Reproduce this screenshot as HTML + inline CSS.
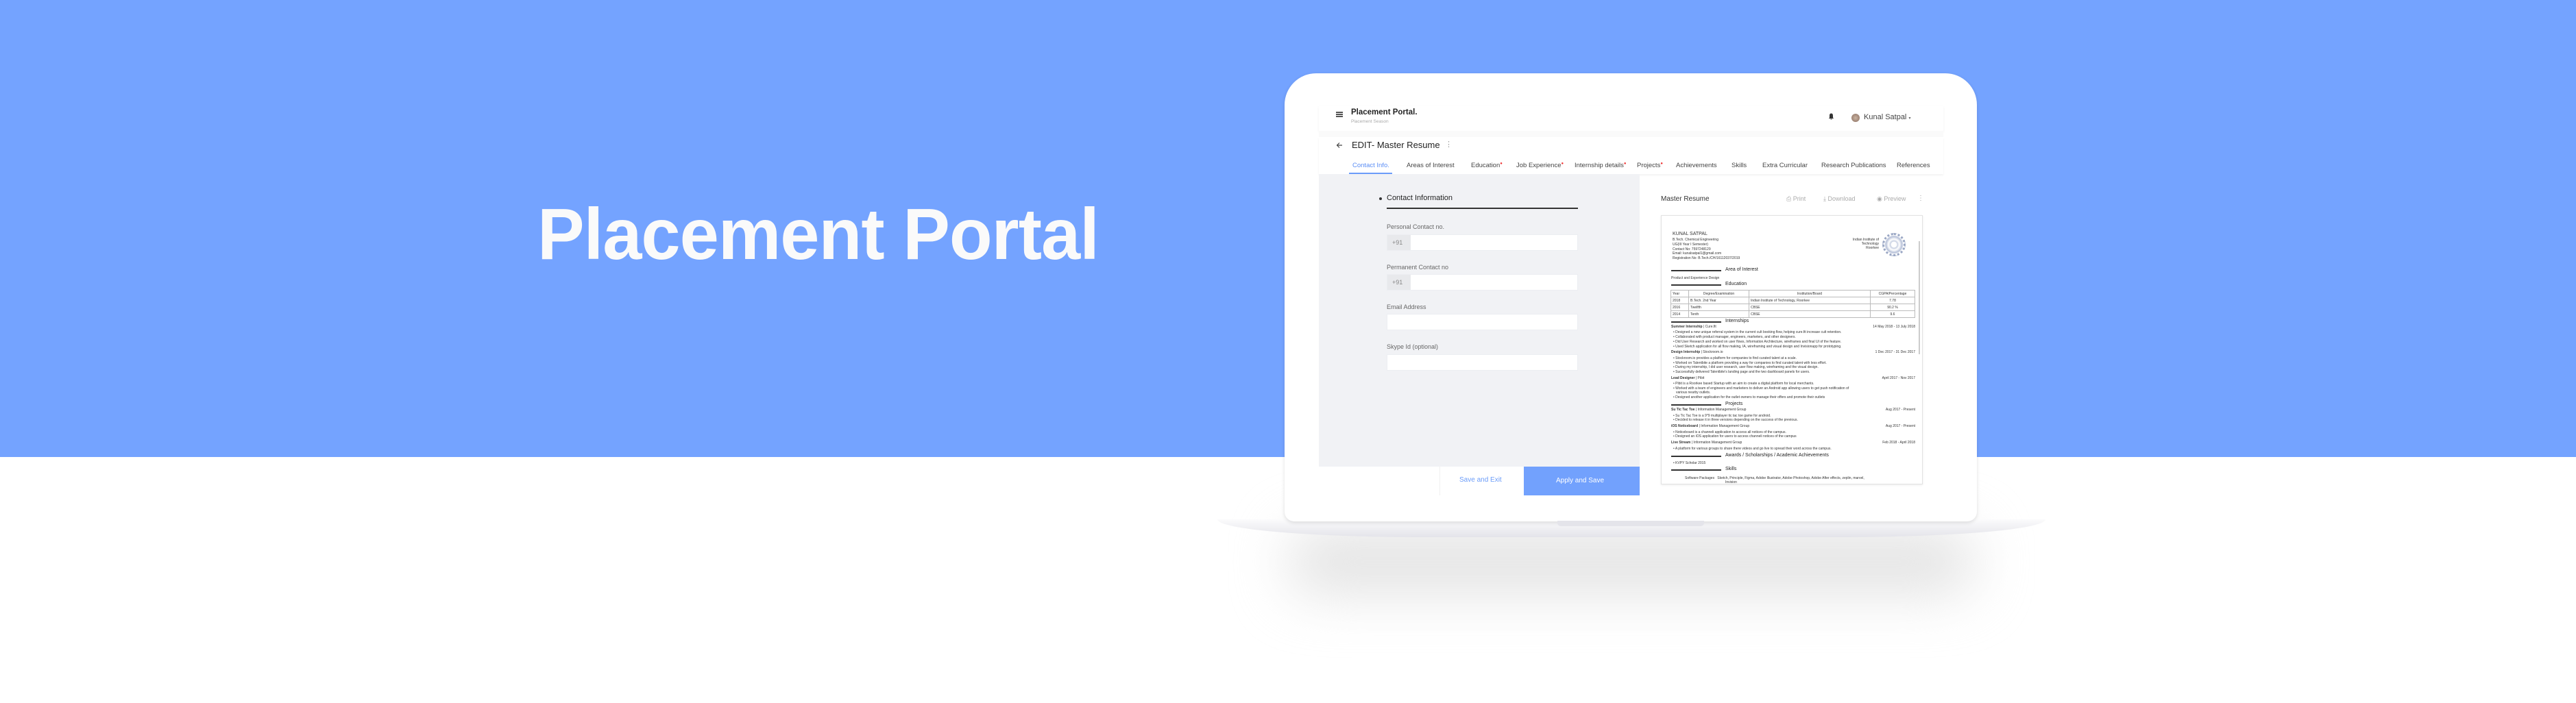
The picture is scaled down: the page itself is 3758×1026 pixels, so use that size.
<!DOCTYPE html>
<html><head><meta charset="utf-8"><style>
*{margin:0;padding:0;box-sizing:border-box}
body{width:3758px;height:1026px;overflow:hidden;background:#fff;position:relative;font-family:"Liberation Sans",sans-serif}
.a{position:absolute}
.blue{left:0;top:0;width:3758px;height:667px;background:#74a3ff}
.title{left:784px;top:282px;font-size:106px;font-weight:bold;color:#fafafa;white-space:nowrap;transform-origin:0 0;transform:scaleX(0.97);letter-spacing:-1px}
.shadow{left:1880px;top:775px;width:1000px;height:90px;background:#e2e2e2;filter:blur(40px);border-radius:40px}
.base{left:1776px;top:758px;width:1208px;height:26px;background:linear-gradient(#fbfbfc,#e4e4ea);border-radius:0 0 300px 300px/0 0 26px 26px}
.body{left:1874px;top:107px;width:1010px;height:654px;background:#fff;border-radius:46px 46px 14px 14px;box-shadow:0 2px 6px rgba(0,0,0,.12)}
.notch{left:2272px;top:760px;width:214px;height:8px;background:#e4e4ea;border-radius:0 0 5px 5px}
.t{position:absolute;white-space:nowrap;color:#333}
.tab{position:absolute;top:236px;font-size:9.5px;color:#444;white-space:nowrap}
.dot{color:#e33;font-size:6px;vertical-align:top}
.lbl{position:absolute;left:2023px;font-size:9px;color:#666}
.inp{position:absolute;left:2023px;width:279px;height:24px;background:#fff;border:1px solid #eceef2}
.pre{position:absolute;left:0;top:0;width:34px;height:22px;background:#e8e9ec;font-size:9px;color:#888;line-height:22px;padding-left:7px}
.r{position:absolute;white-space:nowrap;font-size:5px;color:#333;line-height:6px}
.d{position:absolute;white-space:nowrap;font-size:5px;color:#333;line-height:6px;right:964px}
.hl{position:absolute;left:2438px;width:73px;height:2px;background:#333}
.sh{position:absolute;left:2517px;font-size:7px;color:#222;white-space:nowrap}
table{position:absolute;left:2437px;top:423px;width:357px;border-collapse:collapse;font-size:5px;color:#333}
td{border:1px solid #bbb;height:10px;padding:0 2px}
</style></head><body>
<div class="a blue"></div>
<div class="a title">Placement Portal</div>
<div class="a shadow"></div>
<div class="a base"></div>
<div class="a body"></div>
<div class="a notch"></div>

<div class="a" style="left:1924px;top:154px;width:911px;height:37px;background:#fff;box-shadow:0 2px 4px rgba(0,0,0,.05)"></div>
<div class="a" style="left:1924px;top:191px;width:911px;height:9px;background:#fafafa"></div>
<div class="a" style="left:1924px;top:200px;width:911px;height:54px;background:#fff;box-shadow:0 2px 3px rgba(0,0,0,.05)"></div>
<div class="a" style="left:1949px;top:163px;width:10px;height:1.5px;background:#555;box-shadow:0 3px 0 #555,0 6px 0 #555"></div>
<div class="t" style="left:1971px;top:158px;font-size:11.5px;font-weight:bold;color:#222">Placement Portal.</div>
<div class="t" style="left:1971px;top:174px;font-size:6.5px;color:#aaa">Placement Season</div>
<svg class="a" style="left:2667px;top:165px" width="9" height="10" viewBox="0 0 9 10"><path d="M4.5 0.5C2.5 0.5 2 2 2 4V6.5L1 8H8L7 6.5V4C7 2 6.5 0.5 4.5 0.5Z M3.5 8.5h2v1h-2z" fill="#333"/></svg>
<div class="a" style="left:2701px;top:166px;width:12px;height:12px;border-radius:50%;background:radial-gradient(#c9b2a0,#8a6f62)"></div>
<div class="t" style="left:2719px;top:165px;font-size:11px;color:#444">Kunal Satpal <span style="font-size:6px;color:#666">▾</span></div>

<svg class="a" style="left:1949px;top:207px" width="10" height="10" viewBox="0 0 10 10"><path d="M9 5H1.5M5 1.5L1.5 5L5 8.5" stroke="#444" stroke-width="1.2" fill="none"/></svg>
<div class="t" style="left:1972px;top:204px;font-size:13px;color:#222">EDIT- Master Resume</div>
<div class="t" style="left:2108px;top:204px;font-size:11px;color:#999">⋮</div>

<div class="tab" style="left:1973px;color:#5b8ef5">Contact Info.</div>
<div class="a" style="left:1968px;top:252px;width:63px;height:2px;background:#6b9cf9"></div>
<div class="tab" style="left:2052px">Areas of Interest</div>
<div class="tab" style="left:2146px">Education<span class="dot">●</span></div>
<div class="tab" style="left:2212px">Job Experience<span class="dot">●</span></div>
<div class="tab" style="left:2297px">Internship details<span class="dot">●</span></div>
<div class="tab" style="left:2388px">Projects<span class="dot">●</span></div>
<div class="tab" style="left:2445px">Achievements</div>
<div class="tab" style="left:2526px">Skills</div>
<div class="tab" style="left:2571px">Extra Curricular</div>
<div class="tab" style="left:2657px">Research Publications</div>
<div class="tab" style="left:2767px">References</div>

<div class="a" style="left:1924px;top:254px;width:468px;height:427px;background:#f1f2f5"></div>
<div class="a" style="left:2012px;top:288px;width:4px;height:4px;border-radius:50%;background:#333"></div>
<div class="t" style="left:2023px;top:283px;font-size:11px;color:#222">Contact Information</div>
<div class="a" style="left:2023px;top:303px;width:279px;height:2px;background:#333"></div>
<div class="lbl" style="top:326px">Personal Contact no.</div>
<div class="inp" style="top:342px"><div class="pre">+91</div></div>
<div class="lbl" style="top:385px">Permanent Contact no</div>
<div class="inp" style="top:400px"><div class="pre">+91</div></div>
<div class="lbl" style="top:443px">Email Address</div>
<div class="inp" style="top:458px"></div>
<div class="lbl" style="top:501px">Skype Id (optional)</div>
<div class="inp" style="top:517px"></div>

<div class="a" style="left:2100px;top:681px;width:1px;height:42px;background:#f0f0f0"></div>
<div class="t" style="left:2129px;top:695px;font-size:10px;color:#6b9cf9">Save and Exit</div>
<div class="a" style="left:2223px;top:681px;width:169px;height:42px;background:#72a1fd"></div>
<div class="t" style="left:2270px;top:696px;font-size:10px;color:#fff">Apply and Save</div>

<div class="t" style="left:2423px;top:285px;font-size:10px;color:#333">Master Resume</div>
<div class="t" style="left:2606px;top:285px;font-size:9px;color:#aaa">⎙ Print</div>
<div class="t" style="left:2660px;top:285px;font-size:9px;color:#aaa">⤓ Download</div>
<div class="t" style="left:2738px;top:285px;font-size:9px;color:#aaa">◉ Preview</div>
<div class="t" style="left:2797px;top:284px;font-size:10px;color:#aaa">⋮</div>

<div class="a" style="left:2423px;top:314px;width:382px;height:393px;background:#fff;border:1px solid #e2e2e2;box-shadow:0 1px 3px rgba(0,0,0,.08)"></div>
<div class="a" style="left:2799px;top:352px;width:2px;height:165px;background:#ccc"></div>
<div class="r" style="left:2440px;top:338px;font-size:7px;line-height:8px">KUNAL SATPAL</div>
<div class="r" style="left:2440px;top:347px">B.Tech. Chemical Engineering</div>
<div class="r" style="left:2440px;top:354px">UG(III Year I Semester)</div>
<div class="r" style="left:2440px;top:361px">Contact No: 7597248129</div>
<div class="r" style="left:2440px;top:367px">Email: kunalsatpal1@gmail.com</div>
<div class="r" style="left:2440px;top:374px">Registration No: B.Tech./CH/16112037/2019</div>
<div class="r" style="left:2689px;top:347px;text-align:right;width:52px">Indian Institute of<br>Technology<br>Roorkee</div>
<div class="a" style="left:2746px;top:340px;width:34px;height:34px;border-radius:50%;border:3px dotted #9aa7c4;background:radial-gradient(#fff 20%,#c8d0e2 25%,#fff 40%,#b6c0d8 60%,#fff 70%)"></div>

<div class="hl" style="top:394px"></div><div class="sh" style="top:390px">Area of Interest</div>
<div class="r" style="left:2438px;top:403px">Product and Experience Design</div>
<div class="hl" style="top:415px"></div><div class="sh" style="top:411px">Education</div>
<table>
<tr><td style="width:26px">Year</td><td style="width:88px;text-align:center">Degree/Examination</td><td style="text-align:center">Institution/Board</td><td style="width:65px;text-align:center">CGPA/Percentage</td></tr>
<tr><td>2018</td><td>B.Tech. 2nd Year</td><td>Indian Institute of Technology, Roorkee</td><td style="text-align:center">7.78</td></tr>
<tr><td>2016</td><td>Twelfth</td><td>CBSE</td><td style="text-align:center">90.2 %</td></tr>
<tr><td>2014</td><td>Tenth</td><td>CBSE</td><td style="text-align:center">9.6</td></tr>
</table>
<div class="hl" style="top:469px"></div><div class="sh" style="top:465px">Internships</div>
<div class="r" style="left:2438px;top:474px"><b>Summer Internship</b> | Cure.fit</div><div class="d" style="top:474px">14 May 2018 - 13 July 2018</div>
<div class="r" style="left:2441px;top:482px">• Designed a new unique referral system in the current cult booking flow, helping cure.fit increase cult retention.</div>
<div class="r" style="left:2441px;top:489px">• Collaborated with product manager, engineers, marketers, and other designers.</div>
<div class="r" style="left:2441px;top:496px">• Did User Research and worked on user flows, Information Architecture, wireframes and final UI of the feature.</div>
<div class="r" style="left:2441px;top:503px">• Used Sketch application for all flow making, IA, wireframing and visual design and Invisionapp for prototyping.</div>
<div class="r" style="left:2438px;top:511px"><b>Design Internship</b> | Stockroom.io</div><div class="d" style="top:511px">1 Dec 2017 - 31 Dec 2017</div>
<div class="r" style="left:2441px;top:520px">• Stockroom.io provides a platform for companies to find curated talent at a scale.</div>
<div class="r" style="left:2441px;top:527px">• Worked on Talentbite a platform providing a way for companies to find curated talent with less effort.</div>
<div class="r" style="left:2441px;top:533px">• During my internship, I did user research, user flow making, wireframing and the visual design.</div>
<div class="r" style="left:2441px;top:540px">• Successfully delivered Talentbite's landing page and the two dashboard panels for users.</div>
<div class="r" style="left:2438px;top:549px"><b>Lead Designer</b> | Pibit</div><div class="d" style="top:549px">April 2017 - Nov 2017</div>
<div class="r" style="left:2441px;top:557px">• Pibit is a Roorkee based Startup with an aim to create a digital platform for local merchants.</div>
<div class="r" style="left:2441px;top:564px">• Worked with a team of engineers and marketers to deliver an Android app allowing users to get push notification of</div>
<div class="r" style="left:2445px;top:570px">various nearby outlets.</div>
<div class="r" style="left:2441px;top:577px">• Designed another application for the outlet owners to manage their offers and promote their outlets</div>
<div class="hl" style="top:590px"></div><div class="sh" style="top:586px">Projects</div>
<div class="r" style="left:2438px;top:595px"><b>Su Tic Tac Toe</b> | Information Management Group</div><div class="d" style="top:595px">Aug 2017 - Present</div>
<div class="r" style="left:2441px;top:604px">• Su Tic Tac Toe is a 9*9 multiplayer tic tac toe game for android.</div>
<div class="r" style="left:2441px;top:610px">• Decided to release it in three versions depending on the success of the previous.</div>
<div class="r" style="left:2438px;top:619px"><b>iOS Noticeboard</b> | Information Management Group</div><div class="d" style="top:619px">Aug 2017 - Present</div>
<div class="r" style="left:2441px;top:628px">• Noticeboard is a channeli application to access all notices of the campus.</div>
<div class="r" style="left:2441px;top:634px">• Designed an iOS application for users to access channeli notices of the campus</div>
<div class="r" style="left:2438px;top:643px"><b>Live Stream</b> | Information Management Group</div><div class="d" style="top:643px">Feb 2018 - April 2018</div>
<div class="r" style="left:2441px;top:652px">• A platform for various groups to share there videos and go live to spread their word across the campus.</div>
<div class="hl" style="top:665px"></div><div class="sh" style="top:661px">Awards / Scholarships / Academic Achievements</div>
<div class="r" style="left:2441px;top:673px">• KVPY Scholar 2015</div>
<div class="hl" style="top:685px"></div><div class="sh" style="top:681px">Skills</div>
<div class="r" style="left:2458px;top:695px">Software Packages&nbsp;&nbsp; Sketch, Principle, Figma, Adobe Illustrator, Adobe Photoshop, Adobe After effects, zeplin, marvel,</div>
<div class="r" style="left:2517px;top:701px">Invision</div>
</body></html>
